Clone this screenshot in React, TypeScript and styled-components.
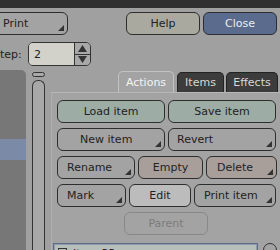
import React, { FC } from "react"
import styled, { createGlobalStyle } from "styled-components"

const GlobalStyle = createGlobalStyle`
    html, body {
        margin: 0;
        padding: 0;
        background: #a0a0a0;
        overflow: hidden;
    }
    body {
        font-family: "DejaVu Sans", "Liberation Sans", sans-serif;
        font-size: 11px;
        color: #222;
    }
`

const Screen = styled.div`
    width: 280px;
    height: 250px;
    overflow: hidden;
    display: flex;
    flex-direction: column;
`

const TopBar = styled.div`
    height: 8px;
    background: #303030;
    flex-shrink: 0;
`

const HeaderRow = styled.div`
    display: flex;
    align-items: center;
    margin-top: 3px;
    height: 24px;
`

const StepRow = styled.div`
    display: flex;
    align-items: center;
    margin-top: 7px;
    height: 24px;
`

const StepLabel = styled.span`
    margin-left: -7px;
    width: 35px;
`

const SpinBox = styled.div`
    display: flex;
    width: 63px;
    height: 24px;
    box-sizing: border-box;
    border: 1px solid #333;
    border-radius: 5px;
    overflow: hidden;
`

const SpinValue = styled.div`
    flex: 1;
    background: #d2d2ca;
    display: flex;
    align-items: center;
    padding-left: 5px;
    border-right: 1px solid #333;
`

const SpinArrows = styled.div`
    width: 15px;
    display: flex;
    flex-direction: column;
    background: #a8a8a8;
`

const SpinHalf = styled.div`
    flex: 1;
    display: flex;
    align-items: center;
    justify-content: center;
    & + & {
        border-top: 1px solid #333;
    }
`

const Main = styled.div`
    display: flex;
    margin-top: 4px;
    flex: 1;
    min-height: 0;
`

const SidePanel = styled.div`
    width: 26px;
    background: #777;
    border-top-right-radius: 5px;
    padding-top: 69px;
    flex-shrink: 0;
`

const SelectedRow = styled.div`
    height: 21px;
    background: #7b8aa6;
`

const ScrollCol = styled.div`
    width: 13px;
    margin-left: 6px;
    margin-top: 2px;
    display: flex;
    flex-direction: column;
    align-items: center;
    gap: 3px;
    flex-shrink: 0;
`

const ScrollCap = styled.div`
    width: 13px;
    height: 5px;
    box-sizing: border-box;
    border: 1px solid #333;
    border-radius: 3px;
    background: #a9a9a9;
`

const ScrollTrack = styled.div`
    width: 13px;
    flex: 1;
    box-sizing: border-box;
    border: 1px solid #333;
    border-bottom: none;
    border-radius: 6px 6px 0 0;
    background: #a8a8a8;
`

const TabArea = styled.div`
    margin-left: 6px;
    margin-top: 1px;
    flex: 1;
    display: flex;
    flex-direction: column;
    min-width: 0;
`

const TabRow = styled.div`
    display: flex;
    justify-content: flex-end;
    align-items: flex-end;
    gap: 2px;
    padding-right: 2px;
    height: 21px;
`

const Tab = styled.div<{ $active?: boolean; $w: number }>`
    width: ${(p) => p.$w}px;
    height: ${(p) => (p.$active ? 21 : 20)}px;
    box-sizing: border-box;
    display: flex;
    align-items: center;
    justify-content: center;
    border: 1px solid ${(p) => (p.$active ? "#c2c2c2" : "#222")};
    border-bottom: none;
    border-radius: 5px 5px 0 0;
    background: ${(p) => (p.$active ? "#a3a3a3" : "#3c3c3c")};
    color: ${(p) => (p.$active ? "#f4f4f4" : "#d8d8d8")};
    margin-right: ${(p) => (p.$active ? 1 : 0)}px;
    font-size: 11px;
`

const TabPanel = styled.div`
    flex: 1;
    border-top: 1px solid #b8b8b8;
    border-left: 1px solid #b0b0b0;
    background: #a3a3a3;
    padding: 7px 0 0 5px;
    display: flex;
    flex-direction: column;
    gap: 5px;
`

const ButtonRow = styled.div`
    display: flex;
    gap: 3px;
`

const ParentRow = styled.div`
    display: flex;
    padding-left: 67px;
`

type Tone = "plain" | "green" | "rose" | "light" | "blue" | "sage" | "off"

const fills: Record<Tone, string> = {
    plain: "#a3a3a3",
    green: "#9daca4",
    rose: "#a89f9b",
    light: "#bcbcbc",
    blue: "#5b6b8d",
    sage: "#a9a99f",
    off: "#a3a3a3",
}

const Button = styled.div<{ $w: number; $tone: Tone; $pad?: number }>`
    position: relative;
    width: ${(p) => p.$w}px;
    height: 23px;
    flex-shrink: 0;
    box-sizing: border-box;
    border: 1px solid ${(p) => (p.$tone === "off" ? "#888" : "#2e2e2e")};
    border-radius: 6px;
    background: ${(p) => fills[p.$tone]};
    color: ${(p) => (p.$tone === "blue" ? "#ececec" : p.$tone === "off" ? "#7c7c7c" : "#222")};
    display: flex;
    align-items: center;
    justify-content: ${(p) => (p.$pad !== undefined ? "flex-start" : "center")};
    padding-left: ${(p) => p.$pad ?? 0}px;
    font-size: 11px;
`

const Caret = styled.span`
    position: absolute;
    right: 3px;
    bottom: 3px;
    width: 0;
    height: 0;
    border-left: 6px solid transparent;
    border-bottom: 6px solid #333;
`

const ListRow = styled.div`
    display: flex;
    align-items: flex-start;
    margin-top: 3px;
    margin-left: -4px;
    gap: 5px;
`

const ListBox = styled.div`
    width: 205px;
    height: 20px;
    box-sizing: border-box;
    border: 1px solid #5c6c8a;
    box-shadow: inset 0 0 0 1px #8e9aa8;
    background: #b6bfba;
    display: flex;
    align-items: flex-start;
    padding: 3px 4px;
    gap: 6px;
`

const Check = styled.span`
    width: 7px;
    height: 7px;
    border: 1px solid #333;
    flex-shrink: 0;
    margin-top: 1px;
`

const Radio = styled.span`
    width: 14px;
    height: 14px;
    box-sizing: border-box;
    border: 1px solid #333;
    border-radius: 50%;
    flex-shrink: 0;
`

interface Btn {
    label: string
    w: number
    tone?: Tone
    menu?: boolean
    pad?: number
}

const rows: Btn[][] = [
    [
        { label: "Load item", w: 108, tone: "green" },
        { label: "Save item", w: 108, tone: "green" },
    ],
    [
        { label: "New item", w: 108, menu: true, pad: 22 },
        { label: "Revert", w: 108, menu: true, pad: 8 },
    ],
    [
        { label: "Rename", w: 78, menu: true, pad: 9 },
        { label: "Empty", w: 65, tone: "rose" },
        { label: "Delete", w: 71, tone: "rose", menu: true, pad: 10 },
    ],
    [
        { label: "Mark", w: 69, menu: true, pad: 9 },
        { label: "Edit", w: 62, tone: "light" },
        { label: "Print item", w: 82, menu: true, pad: 9 },
    ],
]

const ActionButton: FC<Btn> = ({ label, w, tone = "plain", menu, pad }) => (
    <Button $w={w} $tone={tone} $pad={pad}>
        {label}
        {menu && <Caret />}
    </Button>
)

const Arrow: FC<{ up?: boolean }> = ({ up }) => (
    <svg width="9" height="7" viewBox="0 0 9 7">
        <polygon points={up ? "4.5,0 9,7 0,7" : "0,0 9,0 4.5,7"} fill="#333" />
    </svg>
)

const App: FC = () => (
    <Screen>
        <GlobalStyle />
        <TopBar />
        <HeaderRow>
            <Button $w={78} $tone="plain" $pad={12} style={{ marginLeft: -10 }}>
                Print
                <Caret />
            </Button>
            <Button $w={74} $tone="sage" style={{ marginLeft: 58 }}>Help</Button>
            <Button $w={74} $tone="blue" style={{ marginLeft: 3 }}>Close</Button>
        </HeaderRow>
        <StepRow>
            <StepLabel>Step:</StepLabel>
            <SpinBox>
                <SpinValue>2</SpinValue>
                <SpinArrows>
                    <SpinHalf><Arrow up /></SpinHalf>
                    <SpinHalf><Arrow /></SpinHalf>
                </SpinArrows>
            </SpinBox>
        </StepRow>
        <Main>
            <SidePanel>
                <SelectedRow />
            </SidePanel>
            <ScrollCol>
                <ScrollCap />
                <ScrollTrack />
            </ScrollCol>
            <TabArea>
                <TabRow>
                    <Tab $active $w={56}>Actions</Tab>
                    <Tab $w={47}>Items</Tab>
                    <Tab $w={52}>Effects</Tab>
                </TabRow>
                <TabPanel>
                    {rows.map((row, i) => (
                        <ButtonRow key={i}>
                            {row.map((b) => (
                                <ActionButton key={b.label} {...b} />
                            ))}
                        </ButtonRow>
                    ))}
                    <ParentRow>
                        <ActionButton label="Parent" w={84} tone="off" />
                    </ParentRow>
                    <ListRow>
                        <ListBox>
                            <Check />
                            <span>Item 33</span>
                        </ListBox>
                        <Radio />
                    </ListRow>
                </TabPanel>
            </TabArea>
        </Main>
    </Screen>
)

export default App
